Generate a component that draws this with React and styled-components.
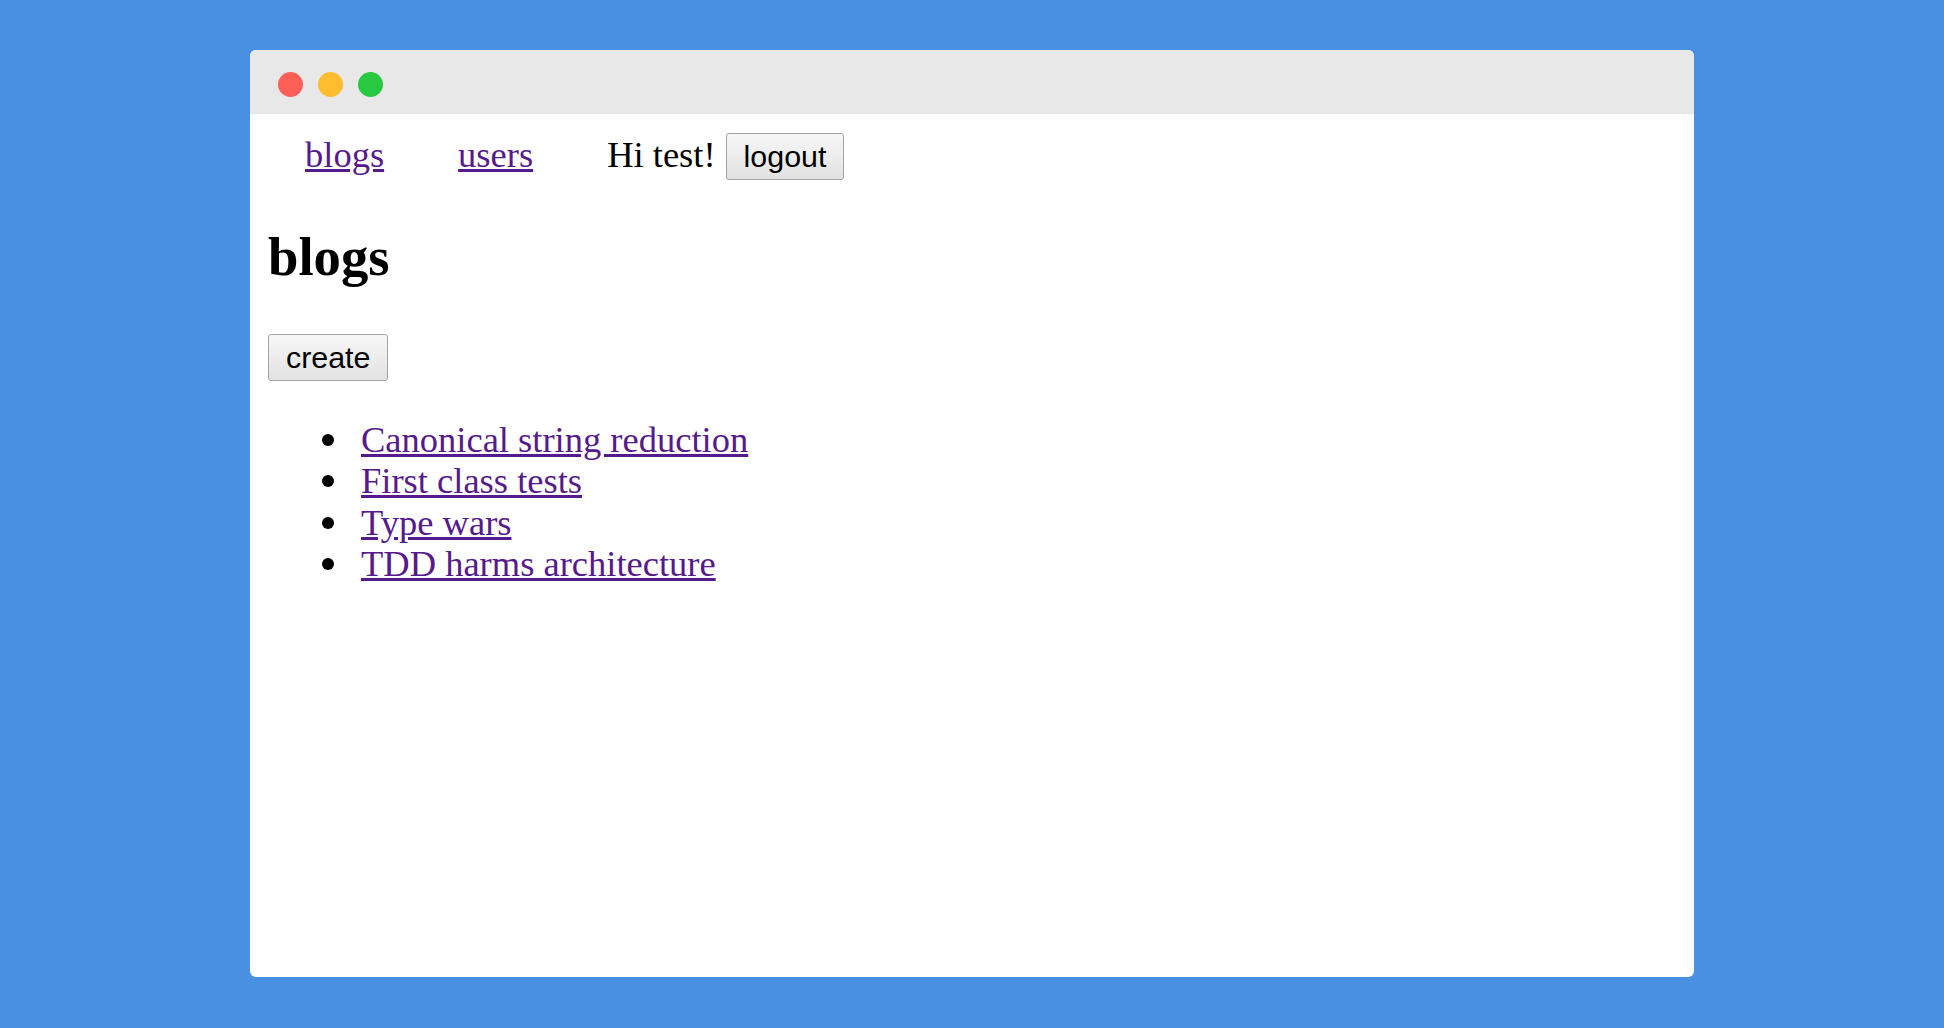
import React from 'react'
import styled, { createGlobalStyle } from 'styled-components'

const GlobalStyle = createGlobalStyle`
    html, body {
        margin: 0;
        padding: 0;
        background: #4a90e2;
    }
`;

const blogs = [
    'Canonical string reduction',
    'First class tests',
    'Type wars',
    'TDD harms architecture',
];

export default function App() {
    return (
        <>
            <GlobalStyle />
            <Page>
                <Window>
                    <TitleBar>
                        <Dot color='#ff5f57' />
                        <Dot color='#febc2e' />
                        <Dot color='#28c840' />
                    </TitleBar>
                    <Content>
                        <Nav>
                            <NavLink href='#'>blogs</NavLink>
                            <NavLink href='#'>users</NavLink>
                            <Greeting>Hi test!</Greeting>
                            <Button>logout</Button>
                        </Nav>
                        <Heading>blogs</Heading>
                        <Toggle>
                            <Button>create</Button>
                        </Toggle>
                        <BlogList>
                            {blogs.map(title => (
                                <BlogItem key={title}>
                                    <Bullet />
                                    <BlogLink href='#'>{title}</BlogLink>
                                </BlogItem>
                            ))}
                        </BlogList>
                    </Content>
                </Window>
            </Page>
        </>
    )
}

const Page = styled.div`
    min-height: 100vh;
    box-sizing: border-box;
    display: flex;
    justify-content: center;
    align-items: flex-start;
    padding-top: 50px;
`;

const Window = styled.div`
    width: 1444px;
    height: 927px;
    background: #fff;
    border-radius: 6px;
    overflow: hidden;
    display: flex;
    flex-direction: column;
`;

const TitleBar = styled.div`
    height: 64px;
    box-sizing: border-box;
    flex-shrink: 0;
    background: #e8e8e8;
    display: flex;
    align-items: flex-start;
    gap: 15px;
    padding: 22px 0 0 28px;
`;

const Dot = styled.span`
    width: 25px;
    height: 25px;
    border-radius: 50%;
    background: ${props => props.color};
`;

const Content = styled.div`
    padding: 19px 18px;
    font-family: "Liberation Serif", "Times New Roman", serif;
    font-size: 36.5px;
    line-height: 41.4px;
    color: #000;
`;

const Nav = styled.div`
    display: flex;
    align-items: baseline;
    padding-left: 37px;
`;

const NavLink = styled.a`
    color: #551a8b;
    text-decoration: underline;
    margin-right: 74px;
`;

const Greeting = styled.span`
    margin-right: 10px;
`;

const Button = styled.button`
    font-family: "Liberation Sans", Arial, sans-serif;
    font-size: 30.4px;
    line-height: 35px;
    color: #000;
    padding: 5px 17px;
    border: 1px solid #a3a3a3;
    border-radius: 3px;
    background: linear-gradient(#f7f7f7, #e2e2e2);
    cursor: pointer;
`;

const Heading = styled.h2`
    font-size: 54.7px;
    line-height: normal;
    font-weight: bold;
    margin: 45px 0 0;
`;

const Toggle = styled.div`
    margin-top: 46px;
`;

const BlogList = styled.ul`
    margin: 38px 0 0;
    padding-left: 54px;
    list-style: none;
`;

const BlogItem = styled.li`
    display: flex;
    align-items: center;
`;

const Bullet = styled.span`
    width: 12px;
    height: 12px;
    border-radius: 50%;
    background: #000;
    margin-right: 27px;
    flex-shrink: 0;
`;

const BlogLink = styled.a`
    color: #551a8b;
    text-decoration: underline;
`;
